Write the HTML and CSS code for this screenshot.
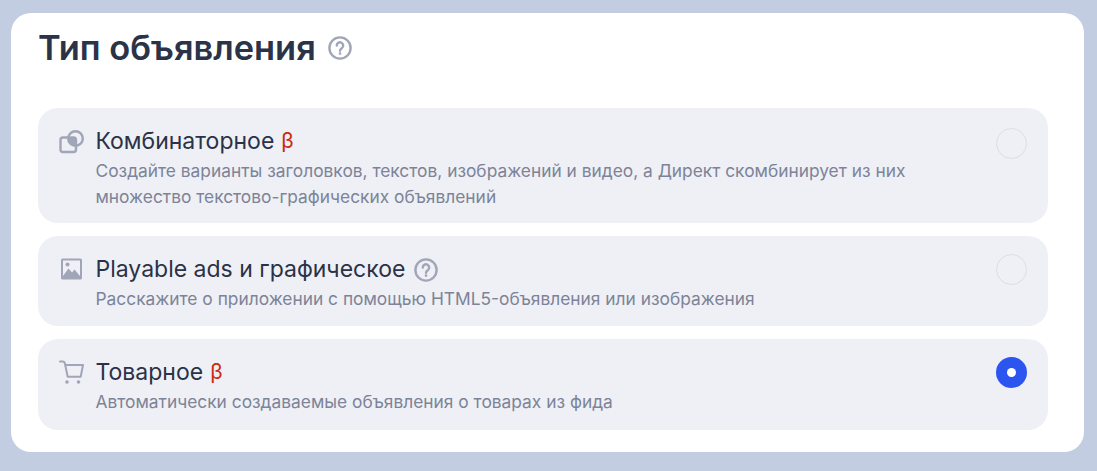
FILE: index.html
```html
<!DOCTYPE html>
<html lang="ru">
<head>
<meta charset="utf-8">
<title>Тип объявления</title>
<link rel="stylesheet" href="styles.css">
</head>
<body>
<main class="card">
  <header class="head">
    <h1 class="title">Тип объявления</h1>
    <svg class="help help-lg" viewBox="0 0 24 24"><circle cx="12" cy="12" r="10.600"/><path d="M8.800 9.600a3.200 3.200 0 1 1 5 2.600c-1.100.8-1.800 1.300-1.800 2.600"/><circle class="dot" cx="12" cy="17.600" r="1.300"/></svg>
  </header>
  <section class="list">
    <article class="row row-tall">
      <svg class="ico" viewBox="0 0 25 25"><rect class="outline" x="1.500" y="8.500" width="15.500" height="14.500" rx="2.500"/><circle class="outline" cx="16.500" cy="9.500" r="7.300"/><path class="fill" d="M9.200 8.500H17V16.800A7.300 7.300 0 0 1 9.200 8.500z"/></svg>
      <div class="body">
        <div class="name"><span>Комбинаторное</span><span class="beta">β</span></div>
        <p class="desc">Создайте варианты заголовков, текстов, изображений и видео, а Директ скомбинирует из них<br>множество текстово-графических объявлений</p>
      </div>
      <span class="radio radio-low"></span>
    </article>
    <article class="row">
      <svg class="ico" viewBox="0 0 25 25"><path class="fill" fill-rule="evenodd" d="M3.500 1.500h18A1.500 1.500 0 0 1 23 3v18a1.500 1.500 0 0 1-1.500 1.500h-18A1.500 1.500 0 0 1 2 21V3a1.500 1.500 0 0 1 1.500-1.500zM4 19l5.500-7.500 3.500 4 2.500-3 5.500 6.500V3.500H4z"/><circle class="fill" cx="8.500" cy="7.500" r="2"/></svg>
      <div class="body">
        <div class="name"><span>Playable ads и графическое</span><svg class="help help-sm" viewBox="0 0 24 24"><circle cx="12" cy="12" r="10.600"/><path d="M8.800 9.600a3.200 3.200 0 1 1 5 2.600c-1.100.8-1.800 1.300-1.800 2.600"/><circle class="dot" cx="12" cy="17.600" r="1.300"/></svg></div>
        <p class="desc">Расскажите о приложении с помощью HTML5-объявления или изображения</p>
      </div>
      <span class="radio"></span>
    </article>
    <article class="row row-last">
      <svg class="ico" viewBox="0 0 25 25"><path class="line" d="M1 1.500h2.800c1 0 1.700.6 2 1.600L8.700 16.800h13L24 5H6.500"/><circle class="fill" cx="8" cy="22" r="1.800"/><circle class="fill" cx="19.500" cy="22" r="1.800"/></svg>
      <div class="body">
        <div class="name"><span>Товарное</span><span class="beta">β</span></div>
        <p class="desc">Автоматически создаваемые объявления о товарах из фида</p>
      </div>
      <span class="radio radio-on"></span>
    </article>
  </section>
</main>
</body>
</html>
```
FILE: styles.css
```css
* { box-sizing: border-box; }
html, body { height: 100%; }
body {
  margin: 0;
  padding: 13px 13px 19px 11px;
  background: #c2cde2;
  font-family: "Inter", "Noto Sans", sans-serif;
  color: #2b3247;
}
.card {
  height: 439px;
  background: #fff;
  border-radius: 20px;
  padding: 14px 36px 22px 27px;
}
.head {
  display: flex;
  align-items: center;
  gap: 12px;
  height: 42px;
}
.title {
  margin: 0;
  font-size: 34.400px;
  line-height: 42px;
  font-weight: 600;
  color: #2b3349;
}
.help { fill: none; stroke: #a0a5b8; stroke-width: 2.400; stroke-linecap: round; }
.help .dot { fill: #a0a5b8; stroke: none; }
.help-lg { width: 24px; height: 24px; }
.help-sm { width: 24px; height: 24px; margin-left: 2px; margin-top: 2px; }
.list {
  display: flex;
  flex-direction: column;
  gap: 13px;
  margin-top: 39px;
}
.row {
  display: flex;
  align-items: flex-start;
  height: 90px;
  padding: 18px 21px 0 21px;
  background: #eef0f5;
  border-radius: 20px;
}
.row-tall { height: 115px; }
.row-last { height: 91px; }
.ico { flex: none; width: 25px; height: 25px; margin-top: 3px; margin-right: 11.500px; }
.fill { fill: #a0a5b8; }
.outline { fill: none; stroke: #a0a5b8; stroke-width: 2.400; }
.line { fill: none; stroke: #a0a5b8; stroke-width: 2; stroke-linejoin: round; stroke-linecap: round; }
.body { flex: 1; }
.name {
  display: flex;
  align-items: center;
  gap: 7px;
  font-size: 23px;
  line-height: 30px;
  color: #2b3247;
}
.beta { color: #cc2a12; font-size: 21px; }
.desc {
  margin: 2px 0 0;
  font-size: 17.350px;
  line-height: 26px;
  color: #7d8398;
}
.radio {
  flex: none;
  width: 31px;
  height: 31px;
  border: 1.500px solid #dcdee4;
  border-radius: 50%;
}
.radio-low { margin-top: 2px; }
.radio-on {
  display: flex;
  align-items: center;
  justify-content: center;
  background: #2c55f0;
  border: 0;
}
.radio-on::after {
  content: "";
  width: 9px;
  height: 9px;
  border-radius: 50%;
  background: #fff;
}
```
